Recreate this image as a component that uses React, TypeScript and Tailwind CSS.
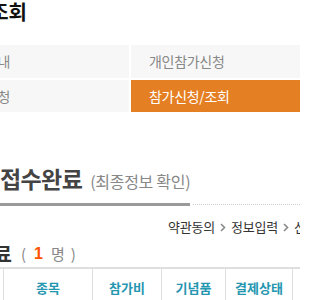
import React from "react";

function Chevron() {
  return (
    <svg width="6" height="9" viewBox="0 0 6 9" className="mx-[5px] shrink-0">
      <path d="M1 1 L4.5 4.5 L1 8" stroke="#8a8a8a" strokeWidth="1.6" fill="none" />
    </svg>
  );
}

export default function App() {
  return (
    <div className="w-[300px] h-[300px] overflow-hidden bg-white font-['Noto_Sans_CJK_KR',sans-serif]">
      {/* page title */}
      <div className="flex justify-end w-[27px] h-[24px] whitespace-nowrap text-[20px] font-bold leading-[24px] text-[#111]">
        참가신청/조회
      </div>

      {/* menu */}
      <div className="mt-[21px] grid grid-cols-[129px_1fr] gap-[2px] text-[14px] tracking-[-0.3px]">
        <div className="h-[33px] bg-[#f7f7f7] flex items-center text-[#888]">
          <div className="w-[10px] flex justify-end whitespace-nowrap">대회안내</div>
        </div>
        <div className="h-[33px] bg-[#f7f7f7] flex items-center pl-[18px] text-[#888] whitespace-nowrap">
          개인참가신청
        </div>
        <div className="h-[32px] bg-[#f7f7f7] flex items-center text-[#888]">
          <div className="w-[10px] flex justify-end whitespace-nowrap">단체참가신청</div>
        </div>
        <div className="h-[32px] bg-[#e57f23] flex items-center pl-[18px] text-white whitespace-nowrap">
          참가신청/조회
        </div>
      </div>

      {/* section heading */}
      <div className="mt-[51px] flex items-baseline whitespace-nowrap">
        <span className="text-[23px] font-bold text-[#444] leading-[30px] tracking-[-0.6px]">접수완료</span>
        <span className="ml-[8px] text-[16px] text-[#888] tracking-[-0.3px]">(최종정보 확인)</span>
      </div>
      <div className="mt-[10px] flex items-center">
        <div className="w-[190px] h-[3px] bg-[#9a9a9a]" />
        <div className="flex-1 ml-[3px] border-t border-dotted border-[#cfcfcf]" />
      </div>

      {/* breadcrumb */}
      <div className="mt-[12px] pl-[168px] flex items-center whitespace-nowrap text-[13px] text-[#333] leading-[18px] tracking-[-0.2px]">
        <span>약관동의</span>
        <Chevron />
        <span>정보입력</span>
        <Chevron />
        <span>신청완료</span>
      </div>

      {/* count */}
      <div className="mt-[7px] flex items-center whitespace-nowrap h-[22px]">
        <div className="w-[12px] flex justify-end text-[20px] font-bold text-[#333]">신청완료</div>
        <span className="ml-[9px] text-[15px] text-[#888]">(</span>
        <span className="ml-[8px] text-[16px] font-bold text-[#ff5200] font-['Liberation_Sans',sans-serif]">1</span>
        <span className="ml-[8px] text-[15px] text-[#888]">명</span>
        <span className="ml-[6px] text-[15px] text-[#888]">)</span>
      </div>

      {/* table header */}
      <div className="mt-[2px] border-t-2 border-[#dedede] grid grid-cols-[3px_89px_69px_64px_67px_1fr] h-[40px] text-[13px] font-bold text-[#2596b0]">
        <div />
        <div className="border-l border-[#dedede] flex items-center justify-center">종목</div>
        <div className="border-l border-[#dedede] flex items-center justify-center">참가비</div>
        <div className="border-l border-[#dedede] flex items-center justify-center">기념품</div>
        <div className="border-l border-[#dedede] flex items-center justify-center">결제상태</div>
        <div className="border-l border-[#dedede]" />
      </div>
    </div>
  );
}
